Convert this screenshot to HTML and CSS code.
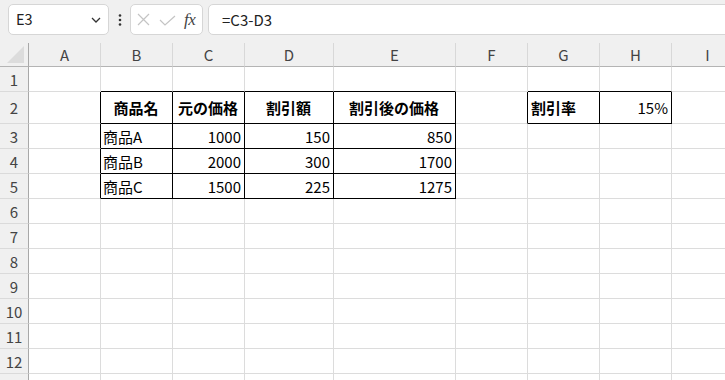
FILE: index.html
```html
<!DOCTYPE html>
<html lang="ja">
<head>
<meta charset="utf-8">
<title>Sheet</title>
<link rel="stylesheet" href="styles.css">
</head>
<body>
<div class="app">
  <div class="toolbar">
    <div class="namebox">
      <span class="nb-text">E3</span>
      <svg class="chev" width="10" height="6" viewBox="0 0 10 6"><polyline points="1,1 5,5 9,1" fill="none" stroke="#333" stroke-width="1.3"/></svg>
    </div>
    <div class="dots">
      <svg width="4" height="12" viewBox="0 0 4 12"><circle cx="2" cy="1.5" r="1.3" fill="#333"/><circle cx="2" cy="6" r="1.3" fill="#333"/><circle cx="2" cy="10.5" r="1.3" fill="#333"/></svg>
    </div>
    <div class="iconbox">
      <svg class="ic-x" width="13" height="13" viewBox="0 0 13 13"><path d="M1 1 L12 12 M12 1 L1 12" stroke="#c4c4c4" stroke-width="1.2" fill="none"/></svg>
      <svg class="ic-ok" width="17" height="11" viewBox="0 0 17 11"><path d="M1 5 L6 10 L16 1" stroke="#c4c4c4" stroke-width="1.2" fill="none"/></svg>
      <span class="fx">fx</span>
    </div>
    <div class="formula">=C3-D3</div>
  </div>

  <div class="sheet">
    <div class="corner"><span class="tri"></span></div>
    <div class="ch">A</div><div class="ch">B</div><div class="ch">C</div><div class="ch">D</div><div class="ch">E</div><div class="ch">F</div><div class="ch">G</div><div class="ch">H</div><div class="ch">I</div>

    <div class="rh">1</div>
    <div class="c"></div><div class="c kb"></div><div class="c kb"></div><div class="c kb"></div><div class="c kb"></div><div class="c"></div><div class="c kb"></div><div class="c kb"></div><div class="c"></div>

    <div class="rh">2</div>
    <div class="c kr"></div><div class="c k th">商品名</div><div class="c k th">元の価格</div><div class="c k th">割引額</div><div class="c k th">割引後の価格</div><div class="c kr"></div><div class="c k bold">割引率</div><div class="c k num">15%</div><div class="c"></div>

    <div class="rh">3</div>
    <div class="c kr"></div><div class="c k">商品A</div><div class="c k num">1000</div><div class="c k num">150</div><div class="c k num">850</div><div class="c"></div><div class="c"></div><div class="c"></div><div class="c"></div>

    <div class="rh">4</div>
    <div class="c kr"></div><div class="c k">商品B</div><div class="c k num">2000</div><div class="c k num">300</div><div class="c k num">1700</div><div class="c"></div><div class="c"></div><div class="c"></div><div class="c"></div>

    <div class="rh">5</div>
    <div class="c kr"></div><div class="c k">商品C</div><div class="c k num">1500</div><div class="c k num">225</div><div class="c k num">1275</div><div class="c"></div><div class="c"></div><div class="c"></div><div class="c"></div>

    <div class="rh">6</div>
    <div class="c"></div><div class="c"></div><div class="c"></div><div class="c"></div><div class="c"></div><div class="c"></div><div class="c"></div><div class="c"></div><div class="c"></div>
    <div class="rh">7</div>
    <div class="c"></div><div class="c"></div><div class="c"></div><div class="c"></div><div class="c"></div><div class="c"></div><div class="c"></div><div class="c"></div><div class="c"></div>
    <div class="rh">8</div>
    <div class="c"></div><div class="c"></div><div class="c"></div><div class="c"></div><div class="c"></div><div class="c"></div><div class="c"></div><div class="c"></div><div class="c"></div>
    <div class="rh">9</div>
    <div class="c"></div><div class="c"></div><div class="c"></div><div class="c"></div><div class="c"></div><div class="c"></div><div class="c"></div><div class="c"></div><div class="c"></div>
    <div class="rh">10</div>
    <div class="c"></div><div class="c"></div><div class="c"></div><div class="c"></div><div class="c"></div><div class="c"></div><div class="c"></div><div class="c"></div><div class="c"></div>
    <div class="rh">11</div>
    <div class="c"></div><div class="c"></div><div class="c"></div><div class="c"></div><div class="c"></div><div class="c"></div><div class="c"></div><div class="c"></div><div class="c"></div>
    <div class="rh">12</div>
    <div class="c"></div><div class="c"></div><div class="c"></div><div class="c"></div><div class="c"></div><div class="c"></div><div class="c"></div><div class="c"></div><div class="c"></div>
    <div class="rh"></div>
    <div class="c"></div><div class="c"></div><div class="c"></div><div class="c"></div><div class="c"></div><div class="c"></div><div class="c"></div><div class="c"></div><div class="c"></div>
  </div>
</div>
</body>
</html>
```

FILE: styles.css
```css
* { box-sizing: border-box; }
html, body {
  margin: 0;
  padding: 0;
  width: 725px;
  height: 380px;
  overflow: hidden;
  background: #ffffff;
  font-family: "Noto Sans CJK JP", "Noto Sans", sans-serif;
}
.app {
  width: 725px;
  height: 380px;
  overflow: hidden;
}
.toolbar {
  height: 43px;
  background: #f0f0f0;
  display: flex;
  align-items: flex-start;
  padding: 4px 0 0 8px;
}
.namebox {
  width: 101px;
  height: 31px;
  background: #fff;
  border: 1px solid #d6d6d6;
  border-radius: 5px;
  display: flex;
  align-items: center;
  justify-content: space-between;
  padding: 0 7px 0 7px;
}
.nb-text {
  font-size: 14.5px;
  color: #222;
  line-height: 1;
}
.chev { margin-top: 1px; }
.dots {
  width: 21px;
  height: 31px;
  display: flex;
  align-items: center;
  justify-content: center;
}
.iconbox {
  width: 73px;
  height: 31px;
  background: #fff;
  border: 1px solid #d6d6d6;
  border-radius: 5px;
  display: flex;
  align-items: center;
  padding: 0 0 0 6px;
}
.ic-x { margin-right: 9px; }
.ic-ok { margin-right: 8px; margin-top: 1px; }
.fx {
  font-family: "Liberation Serif", serif;
  font-style: italic;
  font-size: 17px;
  color: #444;
  line-height: 1;
  letter-spacing: -0.5px;
}
.formula {
  flex: 1;
  height: 31px;
  margin-left: 5px;
  margin-right: -6px;
  background: #fff;
  border: 1px solid #d6d6d6;
  border-radius: 5px 0 0 5px;
  display: flex;
  align-items: center;
  padding-left: 13px;
  font-size: 15px;
  color: #222;
}
.sheet {
  display: grid;
  grid-template-columns: 29px 72px 72px 72px 89px 122px 72px 72px 72px 72px;
  grid-template-rows: 24px 25px 32px repeat(11, 25px);
  width: 744px;
}
.corner {
  background: #f0f0f0;
  border-right: 1px solid #a8a8a8;
  border-bottom: 1px solid #b4b4b4;
  position: relative;
}
.tri {
  position: absolute;
  right: 4px;
  bottom: 3px;
  width: 0;
  height: 0;
  border-left: 17px solid transparent;
  border-bottom: 17px solid #dcdcdc;
}
.ch {
  background: #f0f0f0;
  border-right: 1px solid #d8d8d8;
  border-bottom: 1px solid #b4b4b4;
  display: flex;
  align-items: center;
  justify-content: center;
  font-size: 15px;
  color: #444;
}
.rh {
  background: #f0f0f0;
  border-right: 1px solid #a8a8a8;
  border-bottom: 1px solid #dadada;
  display: flex;
  align-items: center;
  justify-content: center;
  font-size: 15px;
  color: #444;
}
.c {
  border-right: 1px solid #dcdcdc;
  border-bottom: 1px solid #dcdcdc;
  display: flex;
  align-items: center;
  padding: 0 3px 0 2px;
  font-size: 15px;
  color: #000;
  white-space: nowrap;
  overflow: hidden;
}
.k { border-right-color: #000; border-bottom-color: #000; }
.kr { border-right-color: #000; }
.kb { border-bottom-color: #000; }
.th { justify-content: center; font-weight: bold; }
.bold { font-weight: bold; padding-left: 3px; }
.num { justify-content: flex-end; }
```
